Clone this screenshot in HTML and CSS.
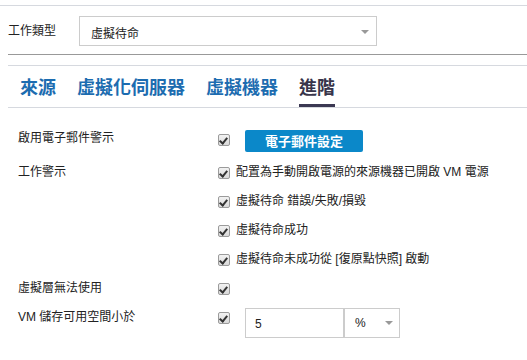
FILE: index.html
```html
<!DOCTYPE html>
<html lang="zh-Hant">

<head>
    <meta charset="UTF-8">
    <meta name="viewport" content="width=device-width, initial-scale=1.0">
    <title>工作設定</title>
    <link rel="stylesheet" href="styles.css">
</head>

<body>
    <div class="page">
        <div class="job-type">
            <span class="job-label">工作類型</span>
            <div class="select job-select">
                <span>虛擬待命</span>
                <span class="caret"></span>
            </div>
        </div>

        <div class="tabs">
            <a class="tab">來源</a>
            <a class="tab">虛擬化伺服器</a>
            <a class="tab">虛擬機器</a>
            <a class="tab active">進階</a>
        </div>

        <div class="form">
            <div class="row row-email">
                <div class="label">啟用電子郵件警示</div>
                <div class="controls">
                    <div class="option">
                        <span class="check"></span>
                        <button class="mail-btn">電子郵件設定</button>
                    </div>
                </div>
            </div>

            <div class="row">
                <div class="label">工作警示</div>
                <div class="controls">
                    <div class="option"><span class="check"></span><span class="text">配置為手動開啟電源的來源機器已開啟 VM 電源</span></div>
                    <div class="option"><span class="check"></span><span class="text">虛擬待命 錯誤/失敗/損毀</span></div>
                    <div class="option"><span class="check"></span><span class="text">虛擬待命成功</span></div>
                    <div class="option"><span class="check"></span><span class="text">虛擬待命未成功從 [復原點快照] 啟動</span></div>
                </div>
            </div>

            <div class="row">
                <div class="label">虛擬層無法使用</div>
                <div class="controls">
                    <div class="option"><span class="check"></span></div>
                </div>
            </div>

            <div class="row">
                <div class="label">VM 儲存可用空間小於</div>
                <div class="controls">
                    <div class="option">
                        <span class="check"></span>
                        <div class="space-field">
                            <div class="space-input">5</div>
                            <div class="select unit-select">
                                <span>%</span>
                                <span class="caret"></span>
                            </div>
                        </div>
                    </div>
                </div>
            </div>
        </div>
    </div>
</body>

</html>
```

FILE: styles.css
```css
body {
    margin: 0;
    font-family: "Liberation Sans", "Noto Sans CJK TC", sans-serif;
    font-size: 12px;
    color: #222;
    background: #ffffff;
}

.page {
    margin-top: 5px;
    border-top: 1px solid #d6d9df;
}

.job-type {
    display: flex;
    align-items: center;
    margin-left: 8px;
    padding: 10px 0 8px;
    border-bottom: 1px solid #999;
}

.job-label {
    width: 71px;
    line-height: 16px;
}

.select {
    display: flex;
    align-items: center;
    justify-content: space-between;
    box-sizing: border-box;
    border: 1px solid #ccc;
    background: #fff;
}

.job-select {
    width: 298px;
    height: 30px;
    padding: 2px 7px 0 11px;
}

.caret {
    width: 0;
    height: 0;
    border-left: 4px solid transparent;
    border-right: 4px solid transparent;
    border-top: 4px solid #999;
}

.tabs {
    display: flex;
    gap: 21px;
    margin: 10px 0 0 8px;
    padding-left: 12px;
    border-top: 1px solid #d6d9df;
    border-bottom: 1px solid #d6d9df;
}

.tab {
    padding: 10px 0 8px;
    font-family: "Noto Sans CJK TC", sans-serif;
    font-size: 18px;
    font-weight: bold;
    line-height: 20px;
    color: #1c6cb0;
    border-bottom: 3px solid transparent;
}

.tab.active {
    color: #38354a;
    border-bottom-color: #3b3852;
}

.form {
    padding: 22px 0 0 18px;
}

.row {
    display: flex;
    align-items: flex-start;
}

.row-email {
    margin-bottom: 12px;
}

.label {
    width: 200px;
    line-height: 16px;
}

.option {
    display: flex;
    align-items: flex-start;
    height: 29px;
}

.row-email .option {
    height: 22px;
}

.check {
    position: relative;
    box-sizing: border-box;
    width: 12px;
    height: 12px;
    margin-top: 3px;
    border: 1px solid #9b9b9b;
    border-radius: 2px;
    background: linear-gradient(#f2f2f2, #d9d9d9);
}

.row-email .check {
    margin-top: 4px;
}

.check::after {
    content: "";
    position: absolute;
    left: 2px;
    top: 1px;
    width: 3px;
    height: 6px;
    border-right: 2px solid #333;
    border-bottom: 2px solid #333;
    transform: rotate(40deg);
}

.text {
    margin-left: 6px;
    line-height: 16px;
}

.mail-btn {
    width: 118px;
    height: 22px;
    margin-left: 15px;
    padding: 0;
    border: none;
    border-radius: 2px;
    background-color: #0b88c9;
    color: #ffffff;
    font-family: "Noto Sans CJK TC", sans-serif;
    font-size: 13px;
    font-weight: bold;
    line-height: 22px;
    cursor: pointer;
}

.space-field {
    display: flex;
    margin: -1px 0 0 15px;
}

.space-input {
    box-sizing: border-box;
    width: 98px;
    height: 30px;
    padding: 7px 0 0 9px;
    border: 1px solid #ccc;
    border-right: none;
    line-height: 16px;
}

.unit-select {
    width: 57px;
    height: 30px;
    padding: 0 6px 0 10px;
    border-left: 2px solid #ccc;
}
```
